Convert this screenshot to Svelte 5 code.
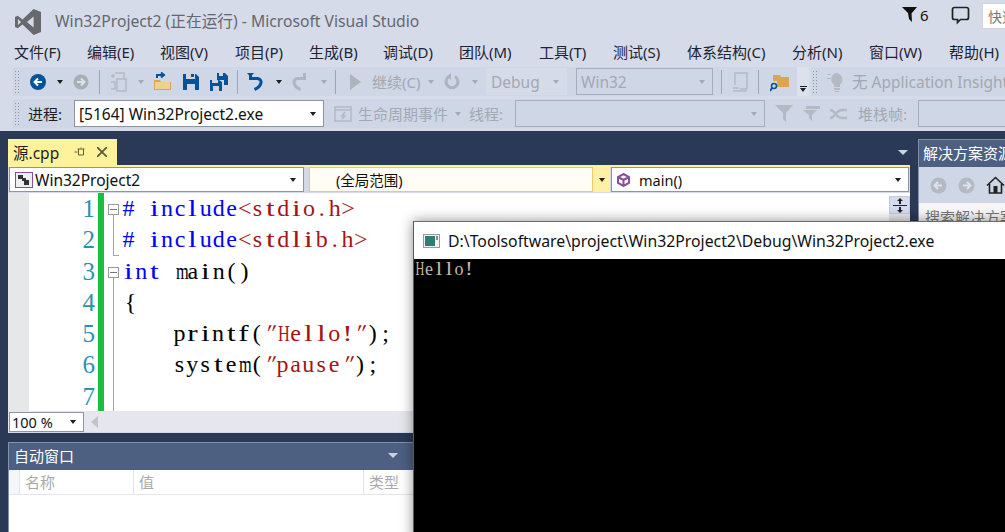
<script lang="ts">
  const menus = [
    ['文件(F)', 73], ['编辑(E)', 73], ['视图(V)', 75], ['项目(P)', 74], ['生成(B)', 74],
    ['调试(D)', 76], ['团队(M)', 80], ['工具(T)', 74], ['测试(S)', 74], ['体系结构(C)', 105],
    ['分析(N)', 77], ['窗口(W)', 80], ['帮助(H)', 60]
  ];

  type Tok = { t: string; c: string };
  const kw = '#0000ff', str = '#a31515', tx = '#000000';
  const code: { n: number; toks: Tok[]; cls: string }[] = [
    { n: 1, cls: 'i0', toks: [{ t: '#', c: kw }, { t: ' ', c: tx }, { t: 'include', c: kw }, { t: '<stdio.h>', c: str }] },
    { n: 2, cls: 'i0', toks: [{ t: '#', c: kw }, { t: ' ', c: tx }, { t: 'include', c: kw }, { t: '<stdlib.h>', c: str }] },
    { n: 3, cls: 'i1', toks: [{ t: 'int', c: kw }, { t: ' main()', c: tx }] },
    { n: 4, cls: 'i2', toks: [{ t: '{', c: tx }] },
    { n: 5, cls: 'i3', toks: [{ t: 'printf(', c: tx }, { t: '"Hello!"', c: str }, { t: ');', c: tx }] },
    { n: 6, cls: 'i3', toks: [{ t: 'system(', c: tx }, { t: '"pause"', c: str }, { t: ');', c: tx }] },
    { n: 7, cls: 'i3', toks: [] }
  ];

  // no serif mono font here, so glyphs get squeezed into fixed cells
  const glyph = (ch: string) => {
    if ('mH'.includes(ch)) return 'wide';
    if ('ilftr!'.includes(ch)) return 'thin';
    if (ch === '"') return 'quote';
    return '';
  };
</script>

{#snippet caret(cls = '')}
  <i class="caret {cls}"></i>
{/snippet}

<div class="vs">
  <header class="title">
    <svg class="logo" width="26" height="28" viewBox="0 0 26 28">
      <path fill="#68696e" d="M18.6 1 26 4v20l-7.4 3L7.5 16.6 2.7 20.3 0 19V9l2.7-1.3 4.8 3.7zM18.6 8.6 12 14l6.6 5.400zM3 11v6l3-3z" fill-rule="evenodd"/>
    </svg>
    <span class="name">Win32Project2 (正在运行) - Microsoft Visual Studio</span>
    <div class="tray">
      <svg width="15" height="17" viewBox="0 0 15 17"><path fill="#111" d="M0 1h15L9.500 7.500 10 16 7 13 6 7z"/></svg>
      <span class="count">6</span>
      <svg class="chat" width="19" height="19" viewBox="0 0 19 19"><path fill="none" stroke="#222" stroke-width="1.700" d="M3.500 1.500h12q2 0 2 2v8q0 2-2 2h-6l-3 3v-3h-3q-2 0-2-2v-8q0-2 2-2z"/></svg>
      <div class="quick">快速</div>
    </div>
  </header>

  <nav class="menu">
    {#each menus as [label, w]}
      <span class="mi" style="width:{w}px">{label}</span>
    {/each}
  </nav>

  <div class="tools one">
    <div class="band">
      <i class="grip"></i>
      <svg class="ml10" width="16" height="16" viewBox="0 0 16 16"><circle cx="8" cy="8" r="8" fill="#00539c"/><path fill="none" stroke="#fff" stroke-width="2" d="M12 8H5M8 4.500 4.500 8 8 11.500"/></svg>
      {@render caret('ml11')}
      <svg class="ml10" width="16" height="16" viewBox="0 0 16 16"><circle cx="8" cy="8" r="7.500" fill="#a9adb5"/><path fill="none" stroke="#dfe2ea" stroke-width="2" d="M4 8h7M8 4.500 11.500 8 8 11.500"/></svg>
      <i class="sep ml10"></i>
      <svg class="ml10" width="17" height="20" viewBox="0 0 17 20"><path fill="none" stroke="#b4b9c4" stroke-width="1.500" d="M5 1h9v5M7 7h9v12H7zM1 4h4M3 2v4M1 10h4v7H1"/></svg>
      {@render caret('ml11 dim')}
      <svg class="ml9" width="19" height="19" viewBox="0 0 19 19"><path fill="#dca650" d="M1 8h6l1 2h10v8H1z"/><path fill="#f0cf8f" d="M2 10h15v7H2z"/><path fill="none" stroke="#00539c" stroke-width="2" d="M4 6V3h6M8 .5 11 3 8 5.500"/></svg>
      <svg class="ml11" width="16" height="16" viewBox="0 0 16 16"><path fill="#00539c" fill-rule="evenodd" d="M0 0h3v5h9V0h1l3 3v13H0zM4 10v6h8v-6zM8 0h3v3H8z"/></svg>
      <svg class="ml11" width="18" height="18" viewBox="0 0 18 18"><path fill="#00539c" fill-rule="evenodd" d="M7 0h2v3h4V0h2l3 3v9h-4V7H7zM0 7h2v3h6V7h1l3 2v9H0zM3 13v5h6v-5z"/></svg>
      <i class="sep ml9"></i>
      <svg class="ml9" width="16" height="19" viewBox="0 0 16 19"><path fill="none" stroke="#00539c" stroke-width="3" d="M3.500 1v5.500h7c6 1 4 8-3 11"/><path fill="#00539c" d="M0 1h7L3.500 5z"/></svg>
      {@render caret('ml13')}
      <svg class="ml10" width="16" height="19" viewBox="0 0 16 19"><path fill="none" stroke="#b0b5c0" stroke-width="3" d="M12.500 1v5.500h-7c-6 1-4 8 3 11"/></svg>
      {@render caret('ml13 dim')}
      <i class="sep ml8"></i>
      <svg class="ml14" width="11" height="16" viewBox="0 0 11 16"><path fill="#aeb3bd" d="M0 0l11 8-11 8z"/></svg>
      <span class="off ml11 wc">继续(C)</span>
      {@render caret('ml6 dim')}
      <svg class="ml10" width="16" height="17" viewBox="0 0 16 17"><path fill="none" stroke="#aeb3bd" stroke-width="3" d="M5 3.500a6 6 0 1 0 6 0"/><path fill="#aeb3bd" d="M7 0v7L3 3.500z"/></svg>
      {@render caret('ml12 dim')}
      <div class="combo flatcombo ml8 debug"><span>Debug</span>{@render caret('dim')}</div>
      <div class="combo ml9 win32"><span>Win32</span>{@render caret('dim')}</div>
      <i class="sep ml8"></i>
      <svg class="ml10" width="16" height="20" viewBox="0 0 16 20"><path fill="none" stroke="#b4b9c4" stroke-width="1.500" d="M3 13V1h12v16H8M1 16h6M1 19h14"/></svg>
      <i class="sep ml10"></i>
      <svg class="ml11" width="19" height="20" viewBox="0 0 19 20"><path fill="#dca650" d="M3 3h7l1 2h8v10H7V9H3z"/><circle cx="4" cy="14" r="2.500" fill="none" stroke="#00539c" stroke-width="1.500"/><path stroke="#00539c" stroke-width="2" d="M2 16l-2 3"/></svg>
    </div>
    <div class="overflow">
      <i class="bar"></i>
      {@render caret('')}
    </div>
    <div class="band right">
      <i class="grip"></i>
      <svg class="ml8" width="20" height="22" viewBox="0 0 20 22"><path fill="#b4b9c4" d="M10 2a6.500 6.500 0 0 1 4 11.500V16H8v-2.500A6.500 6.500 0 0 1 10 2zM8 17h6v2H8zM9 20h4v1H9zM0 3h5v1H3zM1 7h4v1H1z"/></svg>
      <span class="off ml6 ai">无 Application Insights</span>
    </div>
  </div>

  <div class="tools two">
    <div class="band full">
      <i class="grip"></i>
      <span class="lbl ml8">进程:</span>
      <div class="combo white ml12 proc"><span>[5164] Win32Project2.exe</span>{@render caret('')}</div>
      <svg class="ml10" width="18" height="16" viewBox="0 0 18 16"><path fill="none" stroke="#b4b9c4" stroke-width="1.500" d="M1 1h16v14H1zM1 4h16M11 6l-3 4h3l-3 3"/></svg>
      <span class="off ml6 life">生命周期事件</span>
      {@render caret('ml7 dim')}
      <span class="off ml8 thr">线程:</span>
      <div class="combo ml12 thread">{@render caret('dim')}</div>
      <svg class="ml10" width="18" height="19" viewBox="0 0 18 19"><path fill="#b4b9c4" d="M0 1h18l-7 8v9l-3-3V9z"/></svg>
      <svg class="ml10" width="17" height="15" viewBox="0 0 17 15"><path fill="#b4b9c4" d="M3 0h14v3H3zM0 4h14l-5 5v6L6 12V9z"/></svg>
      <svg class="ml10" width="18" height="12" viewBox="0 0 18 12"><path fill="none" stroke="#b4b9c4" stroke-width="2.500" d="M0 2c5 0 6 8 12 8h5M0 10c5 0 6-8 12-8h5"/></svg>
      <span class="off ml10 stack">堆栈帧:</span>
      <div class="combo ml12 frame"></div>
    </div>
  </div>

  <div class="workspace">
    <section class="doc">
      <div class="tabs">
        <div class="tab">
          <span>源.cpp</span>
          <svg class="pin" width="12" height="10" viewBox="0 0 12 10"><path fill="none" stroke="#5f5a3a" d="M.5 5h3M3.500 2h7M4.500 2v6h5V2M7 .5v1"/></svg>
          <svg class="close" width="10" height="10" viewBox="0 0 10 10"><path stroke="#5f5a3a" stroke-width="1.800" d="M0 0l10 10M10 0L0 10"/></svg>
        </div>
        <i class="caret light tabmenu"></i>
      </div>
      <div class="nav">
        <div class="navbox proj">
          <svg width="18" height="16" viewBox="0 0 18 16"><rect x=".5" y=".5" width="17" height="15" fill="#eee" stroke="#8a4f9c"/><path fill="#333" d="M3 3h5v4H3zM9 8h5v5H9zM7 6h4v3H7z"/></svg>
          <span>Win32Project2</span>
          {@render caret('end')}
        </div>
        <div class="navbox scope"><span>(全局范围)</span></div>
        <div class="navdrop">{@render caret('')}</div>
        <div class="navbox fn">
          <svg width="13" height="14" viewBox="0 0 13 14"><path fill="none" stroke="#8a4f9c" stroke-width="2" d="M6.500 1 12 4v6l-5.500 3L1 10V4zM1 4l5.500 3L12 4M6.500 7v6"/></svg>
          <span>main()</span>
          {@render caret('end')}
        </div>
      </div>
      <div class="editor">
        <div class="margin"></div>
        <div class="lines">
          {#each code as line}
            <div class="ln">{line.n}</div>
          {/each}
        </div>
        <div class="green"></div>
        <div class="fold">
          <i class="box a"></i>
          <i class="rail r1"></i>
          <i class="box b"></i>
          <i class="rail r2"></i>
        </div>
        <div class="code">
          {#each code as line}
            <div class="row {line.cls}">
              {#each line.toks as tok}
                {#each tok.t.split('') as ch}<span class="ch {glyph(ch)}" style="color:{tok.c}">{ch}</span>{/each}
              {/each}
            </div>
          {/each}
        </div>
        <div class="vscroll">
          <div class="split">
            <svg width="14" height="15" viewBox="0 0 14 15"><path fill="#222" d="M0 7h14v1H0zM7 0l3 3H8v3H6V3H4zM7 15l-3-3h2V9h2v3h2z"/></svg>
          </div>
        </div>
      </div>
      <div class="hbar">
        <div class="zoom"><span>100 %</span>{@render caret('')}</div>
        <svg class="left" width="7" height="12" viewBox="0 0 7 12"><path fill="#c2c3c9" d="M7 0v12L0 6z"/></svg>
      </div>
      <div class="autos">
        <div class="ahead">
          <span>自动窗口</span>
          <i class="caret light ahcaret"></i>
        </div>
        <div class="cols">
          <span class="c0"></span>
          <span class="c1">名称</span>
          <span class="c2">值</span>
          <span class="c3">类型</span>
        </div>
      </div>
    </section>

    <aside class="side">
      <div class="shead">解决方案资源管理器</div>
      <div class="stools">
        <svg width="17" height="17" viewBox="0 0 17 17"><circle cx="8.500" cy="8.500" r="8" fill="#b4b9c4"/><path fill="none" stroke="#dfe2ea" stroke-width="2" d="M12 8.500H5M8 5 4.500 8.500 8 12"/></svg>
        <svg width="17" height="17" viewBox="0 0 17 17"><circle cx="8.500" cy="8.500" r="8" fill="#b4b9c4"/><path fill="none" stroke="#dfe2ea" stroke-width="2" d="M5 8.500h7M9 5l3.500 3.500L9 12"/></svg>
        <svg width="19" height="18" viewBox="0 0 19 18"><path fill="none" stroke="#222" stroke-width="1.600" d="M1 9.500 9.500 1.500 18 9.500M3.500 8v9h12V8"/><path fill="#222" d="M7.500 10h4v7h-4z"/></svg>
      </div>
      <div class="ssearch">搜索解决方案资源</div>
    </aside>

    <div class="console">
      <div class="ctitle">
        <svg width="17" height="14" viewBox="0 0 17 14"><rect x=".5" y=".5" width="16" height="13" fill="#f2f2f2" stroke="#9a9a9a"/><rect x="2" y="2" width="10" height="10" fill="#2f7d74"/><rect x="13" y="2" width="2" height="4" fill="#888"/></svg>
        <span>D:\Toolsoftware\project\Win32Project2\Debug\Win32Project2.exe</span>
      </div>
      <div class="cbody">
        {#each 'Hello!'.split('') as ch}<span class="cch {glyph(ch)}">{ch}</span>{/each}
      </div>
    </div>
  </div>
</div>

<style>
  :global(body) {
    margin: 0;
    background: #2a3a56;
  }
  .vs {
    width: 1005px;
    height: 532px;
    overflow: hidden;
    display: flex;
    flex-direction: column;
    position: relative;
    background: #2a3a56;
    color: #1e1e1e;
    font: 15px "Noto Sans", "Noto Sans CJK SC", sans-serif;
  }
  i { display: block; font-style: normal; flex: none; }
  svg { display: block; flex: none; }

  .ml6 { margin-left: 6px; }
  .ml7 { margin-left: 7px; }
  .ml8 { margin-left: 8px; }
  .ml9 { margin-left: 9px; }
  .ml10 { margin-left: 10px; }
  .ml11 { margin-left: 11px; }
  .ml12 { margin-left: 12px; }
  .ml13 { margin-left: 13px; }
  .ml14 { margin-left: 14px; }

  .caret {
    width: 0;
    height: 0;
    border-left: 3.500px solid transparent;
    border-right: 3.500px solid transparent;
    border-top: 4px solid #1e1e1e;
  }
  .caret.dim { border-top-color: #a5aab4; }
  .caret.light { border-top-color: #cdd3e0; }
  .caret.end { margin-left: auto; }

  .title {
    height: 40px;
    flex: none;
    background: #d6dbe9;
    display: flex;
    align-items: flex-start;
    padding-left: 15px;
    box-sizing: border-box;
  }
  .logo { margin-top: 8px; }
  .name {
    margin: 10px 0 0 14px;
    font-size: 15.700px;
    line-height: 22px;
    color: #636870;
    white-space: nowrap;
  }
  .tray {
    margin-left: auto;
    display: flex;
    align-items: flex-start;
  }
  .tray > svg:first-child { margin-top: 6px; }
  .count { margin: 4px 0 0 3px; font-size: 15px; line-height: 22px; width: 31px; color: #111; }
  .chat { margin: 6px 0 0 0; }
  .quick {
    margin: 3px 0 0 12px;
    width: 23px;
    height: 26px;
    padding-left: 5px;
    box-sizing: border-box;
    overflow: hidden;
    white-space: nowrap;
    background: #fff;
    border: 1px solid #cfd4e0;
    border-right: 0;
    line-height: 25px;
    font-size: 14px;
    color: #777;
  }

  .menu {
    height: 26px;
    flex: none;
    background: #d6dbe9;
    display: flex;
    align-items: center;
    padding: 0 0 4px 14px;
    white-space: nowrap;
    box-sizing: border-box;
    font-size: 15px;
    color: #1c2434;
  }
  .mi { flex: none; }

  .tools {
    flex: none;
    background: #d6dbe9;
    display: flex;
    align-items: stretch;
    padding-left: 13px;
    box-sizing: border-box;
    white-space: nowrap;
  }
  .one { height: 32px; padding-top: 1px; padding-bottom: 2px; }
  .two { height: 33px; padding-top: 1px; padding-bottom: 3px; }
  .band {
    background: #cfd6e6;
    display: flex;
    align-items: center;
    width: 784px;
    flex: none;
    overflow: hidden;
  }
  .band > * { flex: none; }
  .band.right { width: auto; flex: 1; margin-left: 2px; min-width: 0; }
  .band.full { width: auto; flex: 1; min-width: 0; }
  .overflow {
    width: 12px;
    flex: none;
    display: flex;
    flex-direction: column;
    align-items: center;
    justify-content: flex-end;
    gap: 1px;
    padding-bottom: 4px;
    box-sizing: border-box;
    background: #dde1ec;
  }
  .overflow .bar { width: 7px; height: 1px; background: #1e1e1e; }
  .grip {
    width: 6px;
    height: 24px;
    margin-left: 1px;
    background-image: radial-gradient(#8f96a6 0.8px, transparent 1px);
    background-size: 3px 3px;
  }
  .sep { width: 1px; height: 24px; background: #9ea4b2; }
  .off { color: #a3a8b3; }
  .wc { width: 50px; }
  .lbl { color: #1e1e1e; width: 34px; }
  .life { width: 90px; }
  .thr { width: 34px; }
  .ai { font-size: 15.500px; }
  .stack { width: 48px; }

  .combo {
    height: 27px;
    border: 1px solid #a7adba;
    box-sizing: border-box;
    display: flex;
    align-items: center;
    justify-content: space-between;
    padding: 0 7px 0 4px;
    color: #a3a8b3;
    font-size: 15.500px;
  }
  .combo.white { background: #fff; color: #111; border-color: #8d94a6; }
  .flatcombo { border-color: transparent; background: #d6dbe9; }
  .debug { width: 81px; }
  .win32 { width: 137px; }
  .proc { width: 250px; }
  .thread { width: 250px; justify-content: flex-end; }
  .frame { width: 100px; }

  .workspace {
    position: relative;
    flex: 1;
    min-height: 0;
    display: flex;
    padding: 8px 0 0 8px;
    gap: 8px;
    align-items: flex-start;
    box-sizing: border-box;
  }
  .doc {
    width: 902px;
    flex: none;
    display: flex;
    flex-direction: column;
  }
  .tabs {
    height: 26px;
    display: flex;
    justify-content: space-between;
    align-items: center;
    flex: none;
  }
  .tab {
    width: 109px;
    height: 26px;
    box-sizing: border-box;
    background: #fff29d;
    display: flex;
    align-items: center;
    padding-left: 5px;
    font-size: 15.500px;
    color: #1e1e1e;
  }
  .pin { margin-left: 15px; }
  .close { margin-left: 11px; }
  .tabmenu { margin-right: 2px; border-left-width: 5px; border-right-width: 5px; border-top-width: 5px; }

  .nav {
    height: 28px;
    flex: none;
    box-sizing: border-box;
    display: flex;
    align-items: stretch;
    background: #d3d9e6;
    border-top: 2px solid #fff29d;
    padding: 0 1px 1px 1px;
    font-size: 14.500px;
    color: #111;
  }
  .navbox {
    background: #fff;
    box-sizing: border-box;
    border: 1px solid #8d94a6;
    display: flex;
    align-items: center;
    padding: 0 7px 0 5px;
    white-space: nowrap;
  }
  .proj { width: 295px; gap: 2px; font-size: 15.500px; }
  .scope {
    width: 284px;
    margin-left: 5px;
    padding-left: 26px;
    background: #fffdf5;
    border-color: #f2c766;
  }
  .navdrop {
    width: 17px;
    box-sizing: border-box;
    background: #fff0a5;
    display: flex;
    align-items: center;
    justify-content: center;
  }
  .fn { flex: 1; margin-left: 1px; padding-left: 5px; }
  .fn span { margin-left: 9px; }

  .editor {
    height: 218px;
    flex: none;
    background: #fff;
    display: flex;
    overflow: hidden;
  }
  .margin { width: 21px; flex: none; background: #e6e7e8; }
  .lines { width: 66px; flex: none; }
  .ln {
    height: 31.300px;
    text-align: right;
    font: 25px/31.300px "Liberation Serif", serif;
    color: #2b91af;
  }
  .green { width: 6px; flex: none; margin-left: 3px; background: #17bf42; }
  .fold { width: 17px; flex: none; position: relative; }
  .box {
    position: absolute;
    left: 4px;
    width: 11px;
    height: 11px;
    box-sizing: border-box;
    border: 1px solid #9a9a9a;
    background: linear-gradient(#777, #777) center / 7px 1px no-repeat;
  }
  .box.a { top: 11px; }
  .box.b { top: 74px; }
  .rail { position: absolute; left: 9px; width: 1px; background: #a5a5a5; }
  .r1 { top: 22px; height: 41px; }
  .r1::after { content: ''; display: block; position: absolute; top: 40px; left: 0; width: 6px; height: 1px; background: #a5a5a5; }
  .r2 { top: 85px; height: 135px; }
  .code { flex: 1; min-width: 0; }
  .row {
    height: 31.300px;
    display: flex;
    align-items: center;
    font: 24px/31.300px "Liberation Serif", serif;
    white-space: pre;
  }
  .ch { display: block; width: 12.900px; text-align: center; flex: none; }
  .wide { transform: scaleX(0.68); }
  .thin { transform: scaleX(1.3); }
  .quote { transform: skewX(-22deg); }
  .i0 { padding-left: 1px; }
  .i1 { padding-left: 1px; }
  .i2 { padding-left: 3px; }
  .i3 { padding-left: 52px; }
  .vscroll { width: 21px; flex: none; background: #e8e8ec; }
  .vscroll::before { content: ''; display: block; height: 3px; background: #fff; }
  .split {
    height: 18px;
    background: #d5dcf0;
    border: 1px solid #c1c9de;
    box-sizing: border-box;
    display: flex;
    align-items: center;
    justify-content: center;
  }

  .hbar {
    height: 22px;
    flex: none;
    background: #e6e7ec;
    display: flex;
    align-items: center;
    border-bottom: 1px solid #d7dae3;
    box-sizing: border-box;
  }
  .zoom {
    width: 75px;
    height: 20px;
    margin-left: 1px;
    background: #fff;
    border: 1px solid #8d94a6;
    box-sizing: border-box;
    display: flex;
    align-items: center;
    justify-content: space-between;
    padding: 0 7px 0 2px;
    font-size: 14.500px;
    color: #111;
  }
  .left { margin-left: 7px; }

  .autos {
    margin-top: 9px;
    background: #fff;
    border-left: 1px solid #8292ad;
    height: 100px;
    flex: none;
  }
  .ahead {
    height: 28px;
    box-sizing: border-box;
    border-top: 1px solid #8292ad;
    background: #4d6082;
    color: #fff;
    display: flex;
    align-items: center;
    padding: 0 0 2px 5px;
    font-size: 15px;
  }
  .ahcaret {
    margin-left: 314px;
    border-left-width: 5px;
    border-right-width: 5px;
    border-top-width: 5px;
  }
  .cols {
    height: 25px;
    display: flex;
    box-sizing: border-box;
    border-bottom: 1px solid #e4e5ea;
    color: #a9a9ad;
    font-size: 15px;
    line-height: 24px;
  }
  .cols span { box-sizing: border-box; border-right: 1px solid #e4e5ea; padding-left: 5px; flex: none; }
  .c0 { width: 11px; background: #f5f6f9; }
  .c1 { width: 114px; }
  .c2 { width: 230px; }
  .c3 { width: 100px; }

  .side {
    flex: 1;
    display: flex;
    flex-direction: column;
    min-width: 0;
    overflow: hidden;
    border-left: 1px solid #8292ad;
  }
  .shead {
    height: 28px;
    background: #4d6082;
    border-top: 1px solid #8292ad;
    box-sizing: border-box;
    color: #fff;
    line-height: 26px;
    padding-left: 4px;
    white-space: nowrap;
    font-size: 15px;
  }
  .stools {
    height: 36px;
    background: #cfd6e6;
    display: flex;
    align-items: center;
    gap: 11px;
    padding-left: 11px;
  }
  .ssearch {
    height: 40px;
    background: #f7f7f9;
    color: #777;
    padding: 3px 0 0 6px;
    white-space: nowrap;
    font-size: 15px;
  }

  .console {
    position: absolute;
    left: 413px;
    top: 90px;
    width: 640px;
    height: 320px;
    display: flex;
    flex-direction: column;
    background: #000;
    box-shadow: 0 0 12px rgba(0, 0, 0, 0.45);
    border-top: 1px solid #6c6c6c;
    border-left: 1px solid #5a5a5a;
    box-sizing: border-box;
  }
  .ctitle {
    height: 37px;
    flex: none;
    background: #fff;
    display: flex;
    align-items: center;
    padding-left: 9px;
    gap: 8px;
    color: #111;
    font-size: 15.800px;
    white-space: nowrap;
  }
  .cbody {
    display: flex;
    font: 18px/20px "Liberation Serif", serif;
    color: #c0b8a8;
  }
  .cch { display: block; width: 10px; text-align: center; flex: none; }
</style>
